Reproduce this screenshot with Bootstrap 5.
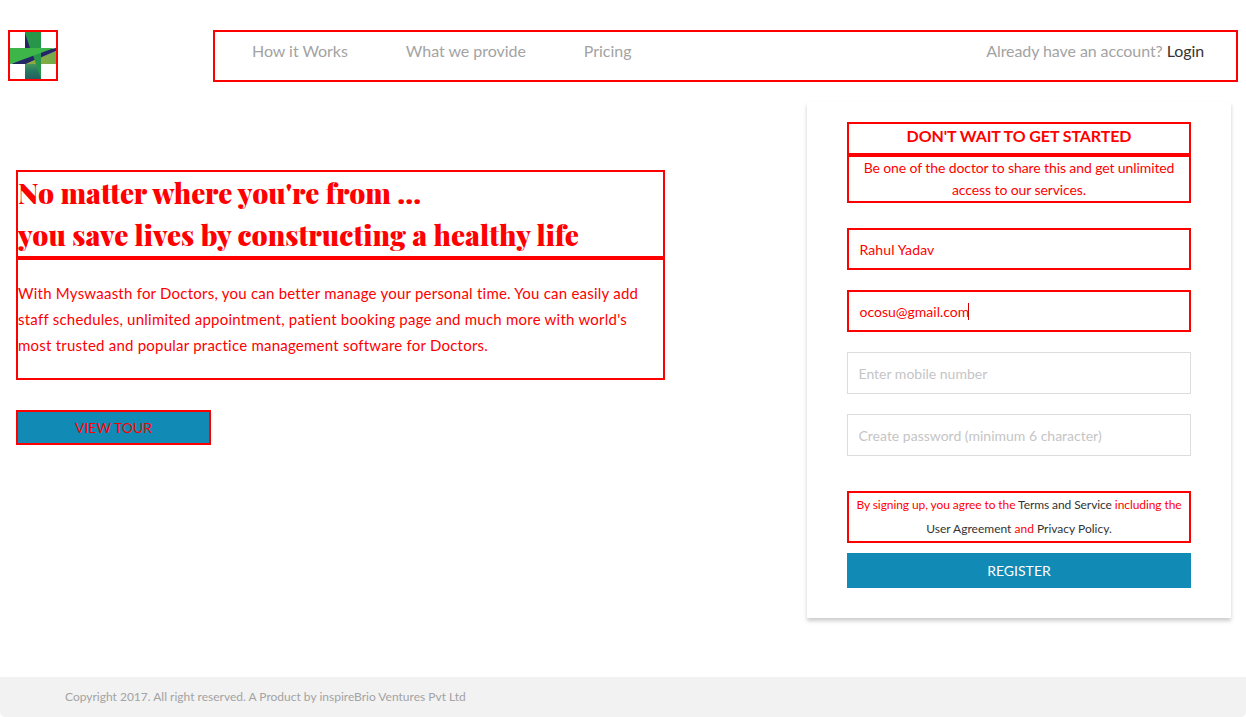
<!DOCTYPE html>
<html lang="en">
<head>
<meta charset="utf-8">
<meta name="viewport" content="width=device-width, initial-scale=1">
<title>Myswaasth for Doctors</title>
<link href="https://cdn.jsdelivr.net/npm/bootstrap@5.3.0/dist/css/bootstrap.min.css" rel="stylesheet">
<style>
body{font-family:Lato,"Liberation Sans",sans-serif;font-size:14px;color:#333;height:717px;overflow:hidden}
.outlined{border:2px solid red}
.tone-red{color:red}
.tone-gray{color:#a3a3a3}
.tone-dark{color:#333}
header{padding:30px 8px 0}
.brand-box{width:50px;height:51px;margin-right:155px}
.top-nav{height:52px;padding:8px 32px 0 37px;font-size:16px;line-height:21px}
.top-links{gap:58px;letter-spacing:-.04px}
.account{letter-spacing:-.08px}
main{height:595px;padding:20px 15px 0 16px}
.pitch{width:649px;padding-top:68px}
.pitch h1{font-family:"Playfair Display","Abril Fatface","Liberation Serif",serif;font-weight:900;font-size:28px;line-height:42px;height:88px;letter-spacing:.045px}
.pitch h1 span{display:block;white-space:nowrap}
.pitch-copy{height:122px;padding-top:20px;font-size:15px;line-height:26px;letter-spacing:.23px;white-space:nowrap}
.btn-flat{--bs-btn-border-radius:0;--bs-btn-bg:#118ab5;--bs-btn-hover-bg:#0e7da5;height:35px;font-size:14px;line-height:21px;padding:0}
.btn-tour{width:195px;margin-top:30px;border:2px solid red;color:red}
.signup{width:424px;height:516px;padding:20px 40px 0;box-shadow:0 3px 4px rgba(0,0,0,.2)}
.signup h2{height:33px;font-size:16px;line-height:21px;padding-top:1px;font-weight:700;letter-spacing:-.1px}
.signup-sub{height:48px;line-height:22px;padding:0 10px;margin-bottom:25px;letter-spacing:-.1px}
.signup .form-control{height:42px;border-radius:0;font-size:14px;line-height:21px;border-color:#ddd;padding:6px 10.5px}
.signup .form-control::placeholder{color:#c5c5c5}
.signup .form-control.filled{border:2px solid red;color:red;padding:8px 10.5px}
.signup input.filled{letter-spacing:.12px}
.fields{gap:20px}
.caret-bar{width:1px;height:17px;background:#d00000;margin-left:-1px}
.terms{height:52px;font-size:12px;line-height:24px;margin:35px 0 10px;white-space:nowrap}
.terms-lead{letter-spacing:-.08px}
footer{height:40px;background:#f2f2f2;border-radius:0 0 5px 5px;padding-left:65px;font-size:12px;line-height:40px}
</style>
</head>
<body>
<header class="d-flex align-items-start">
  <a href="#" class="brand-box outlined flex-shrink-0 d-block" aria-label="Home">
    <svg class="d-block" width="46" height="47" viewBox="0 0 46 47">
      <defs>
        <linearGradient id="stem" x1="0" y1="0" x2="0" y2="1"><stop offset="0" stop-color="#4d9a58"/><stop offset=".45" stop-color="#287b65"/><stop offset="1" stop-color="#245f60"/></linearGradient>
        <linearGradient id="arm" x1="0" y1="0" x2="1" y2="0"><stop offset="0" stop-color="#a3ad3a"/><stop offset="1" stop-color="#6eaa4d"/></linearGradient>
      </defs>
      <path d="M15 0H31V16H15Z" fill="#27964a"/>
      <path d="M15 1L20 16H15Z" fill="#25235f"/>
      <path d="M15 31H31V47H15Z" fill="url(#stem)"/>
      <path d="M46 19V32H15Z" fill="url(#arm)"/>
      <path d="M46 16V19L16 32H1L24 20Z" fill="#242766"/>
      <path d="M16 32L31 25V32Z" fill="#8dab42"/>
      <path d="M23 23L31 20V47Z" fill="#27964a"/>
      <path d="M0 16H44L1 32H0Z" fill="#3db549"/>
    </svg>
  </a>
  <nav class="top-nav outlined flex-grow-1 d-flex justify-content-between tone-gray">
    <div class="top-links d-flex">
      <a class="text-reset text-decoration-none" href="#">How it Works</a>
      <a class="text-reset text-decoration-none" href="#">What we provide</a>
      <a class="text-reset text-decoration-none" href="#">Pricing</a>
    </div>
    <div class="account">Already have an account? <a class="tone-dark text-decoration-none" href="#">Login</a></div>
  </nav>
</header>
<main class="d-flex justify-content-between align-items-start">
  <section class="pitch">
    <h1 class="outlined tone-red m-0"><span>No matter where you're from ...</span><span>you save lives by constructing a healthy life</span></h1>
    <p class="pitch-copy outlined tone-red m-0">With Myswaasth for Doctors, you can better manage your personal time. You can easily add<br>staff schedules, unlimited appointment, patient booking page and much more with world's<br>most trusted and popular practice management software for Doctors.</p>
    <button class="btn btn-flat btn-tour d-block" type="button">VIEW TOUR</button>
  </section>
  <form class="signup bg-white">
    <h2 class="outlined tone-red text-center mb-0">DON'T WAIT TO GET STARTED</h2>
    <p class="signup-sub outlined tone-red text-center">Be one of the doctor to share this and get unlimited access to our services.</p>
    <div class="fields d-flex flex-column">
      <input class="form-control filled" type="text" value="Rahul Yadav" aria-label="Name">
      <div class="form-control filled d-flex align-items-center"><span>ocosu@gmail.com</span><span class="caret-bar"></span></div>
      <input class="form-control" type="tel" placeholder="Enter mobile number">
      <input class="form-control" type="password" placeholder="Create password (minimum 6 character)">
    </div>
    <p class="terms outlined tone-red text-center"><span class="terms-lead">By signing up, you agree to the <a class="tone-dark text-decoration-none" href="#">Terms and Service</a> including the</span><br><a class="tone-dark text-decoration-none" href="#">User Agreement</a> and <a class="tone-dark text-decoration-none" href="#">Privacy Policy.</a></p>
    <button class="btn btn-flat text-white border-0 w-100 d-block" type="button">REGISTER</button>
  </form>
</main>
<footer class="tone-gray">Copyright 2017. All right reserved. A Product by inspireBrio Ventures Pvt Ltd</footer>
<script src="https://cdn.jsdelivr.net/npm/bootstrap@5.3.0/dist/js/bootstrap.bundle.min.js"></script>
</body>
</html>
